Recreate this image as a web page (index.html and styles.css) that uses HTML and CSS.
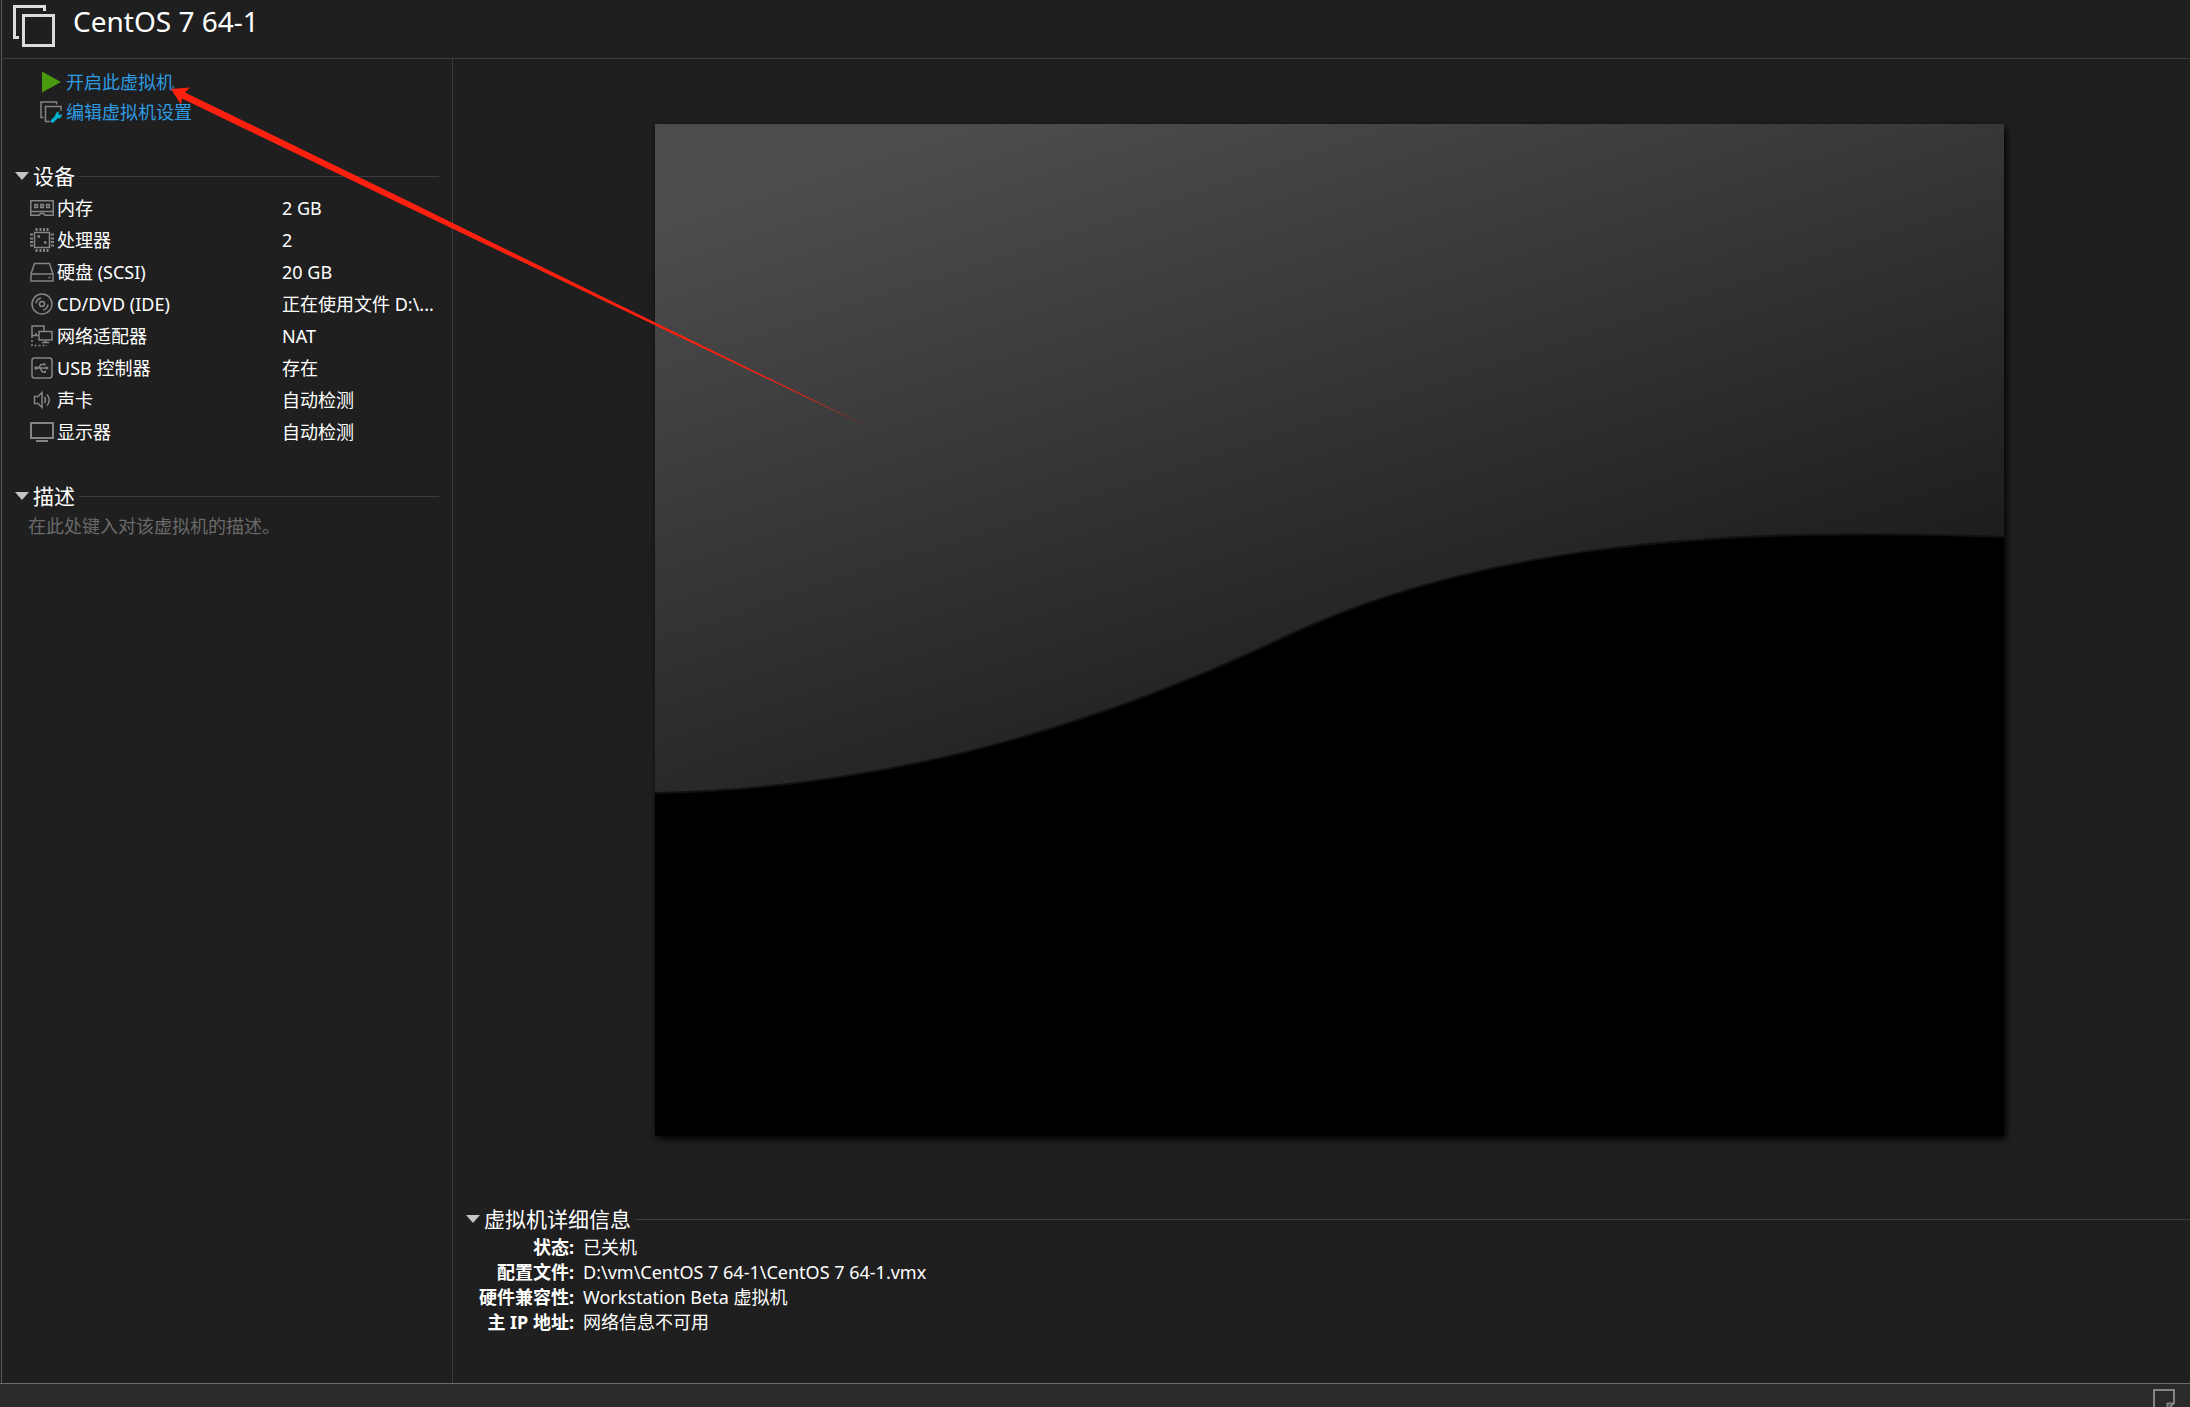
FILE: index.html
```html
<!DOCTYPE html>
<html lang="zh-CN">
<head>
<meta charset="utf-8">
<title>CentOS 7 64-1</title>
<link rel="stylesheet" href="styles.css">
</head>
<body>
<div class="app">
  <header class="title-bar">
    <svg class="title-icon" width="42" height="42" viewBox="0 0 42 42" fill="none" stroke="#dcdcdc" stroke-width="3" aria-hidden="true">
      <path d="M6 32.500H1.500V1.500H31.500V6"/><rect x="10.500" y="10.500" width="30" height="30"/>
    </svg>
    <h1 class="title">CentOS 7 64-1</h1>
  </header>

  <div class="workspace">
    <aside class="sidebar">
      <nav class="actions">
        <a class="action" href="#start">
          <svg width="22" height="22" viewBox="0 0 22 22" aria-hidden="true"><path d="M2 0.500L21 11L2 21.500Z" fill="#4a9a0f"/></svg>
          <span>开启此虚拟机</span>
        </a>
        <a class="action" href="#settings">
          <svg width="22" height="22" viewBox="0 0 22 22" fill="none" aria-hidden="true">
            <path d="M3.500 16.500H1V1H16.500V3.500M10 20.500H5.500V5.500H21V9.500" stroke="#858585" stroke-width="1.500"/>
            <path d="M12.500 20L18 14.500" stroke="#00b4d2" stroke-width="3.500" stroke-linecap="round"/>
            <path d="M20 10.500L17.500 13V15H19.500L21.800 12.700Q22.500 16.500 19.500 17.500Q15.500 17.500 15.200 14.500Q15.800 10.500 20 10.500Z" fill="#00b4d2"/>
          </svg>
          <span>编辑虚拟机设置</span>
        </a>
      </nav>

      <section class="section">
        <h2 class="section-title"><span class="caret"></span>设备</h2>
        <dl class="devices">
          <div class="device">
            <dt><svg class="icon" width="24" height="24" viewBox="0 0 24 24"><path d="M.8 4.800H23.200V19.200H15L13.500 17.500H10.500L9 19.200H.8ZM1 15.500H23"/><path d="M4.800 8.500H7.500V11.500H4.800ZM10.700 8.500H13.400V11.500H10.700ZM16.600 8.500H19.300V11.500H16.600Z"/></svg>内存</dt>
            <dd>2 GB</dd>
          </div>
          <div class="device">
            <dt><svg class="icon" width="24" height="24" viewBox="0 0 24 24"><rect x="4.500" y="4.500" width="15" height="15"/><path stroke-width="2" d="M6.500 0V3M10.500 0V3M14 0V3M17.500 0V3M6.500 21V24M10.500 21V24M14 21V24M17.500 21V24M0 6.500H3M0 10.500H3M0 14H3M0 17.500H3M21 6.500H24M21 10.500H24M21 14H24M21 17.500H24"/><path stroke-width="2.500" d="M7.500 8.500H10M14 14.500H16.500"/></svg>处理器</dt>
            <dd>2</dd>
          </div>
          <div class="device">
            <dt><svg class="icon" width="24" height="24" viewBox="0 0 24 24"><path d="M1 14L4.500 3.500H19.500L23 14V21H1ZM1 14H23M18.500 17.500H20.500"/></svg>硬盘 (SCSI)</dt>
            <dd>20 GB</dd>
          </div>
          <div class="device">
            <dt><svg class="icon" width="24" height="24" viewBox="0 0 24 24"><circle cx="12" cy="12" r="10"/><circle cx="12" cy="12" r="2.500"/><path d="M6 11.500Q6.500 7 11 6M18 12.500Q17.500 17 13 18"/></svg>CD/DVD (IDE)</dt>
            <dd>正在使用文件 D:\...</dd>
          </div>
          <div class="device">
            <dt><svg class="icon" width="24" height="24" viewBox="0 0 24 24"><path d="M8 11.500H2V2H14V7M9 7.500H22V16H9ZM15.500 16V18.500M12 18.500H19M6 9V11.500"/><path stroke-dasharray="2 2" d="M2 12V21.500H17"/></svg>网络适配器</dt>
            <dd>NAT</dd>
          </div>
          <div class="device">
            <dt><svg class="icon" width="24" height="24" viewBox="0 0 24 24"><rect x="2" y="2" width="20" height="20" rx="2.500"/><path d="M6 12H17M8.500 12L11 8.500H14M10 12L12.500 16H15"/><circle cx="6" cy="12" r="1" fill="#858585"/><path d="M16 10L19 12L16 14Z" fill="#858585" stroke="none"/><path d="M13.500 7.200H15.500V9.500H13.500ZM14 14.800H16V17H14Z" fill="#858585" stroke="none"/></svg>USB 控制器</dt>
            <dd>存在</dd>
          </div>
          <div class="device">
            <dt><svg class="icon" width="24" height="24" viewBox="0 0 24 24"><path d="M4.500 8.500H8L12 4.500V19.500L8 15.500H4.500ZM14.500 9Q16.500 12 14.500 15M17 6.500Q21.500 12 17 17.500"/></svg>声卡</dt>
            <dd>自动检测</dd>
          </div>
          <div class="device">
            <dt><svg class="icon" width="24" height="24" viewBox="0 0 24 24"><rect x="1" y="3" width="22" height="15" stroke-width="2"/><path stroke-width="2" d="M6 21H18"/></svg>显示器</dt>
            <dd>自动检测</dd>
          </div>
        </dl>
      </section>

      <section class="section">
        <h2 class="section-title"><span class="caret"></span>描述</h2>
        <p class="description">在此处键入对该虚拟机的描述。</p>
      </section>
    </aside>

    <main class="main">
      <div class="stage">
        <svg class="preview" viewBox="0 0 1349 1012" role="img" aria-label="虚拟机屏幕">
          <defs>
            <linearGradient id="sheen" gradientUnits="userSpaceOnUse" x1="33" y1="99" x2="255" y2="774">
              <stop offset="0" stop-color="#4c4c4c"/><stop offset="1" stop-color="#1d1d1d"/>
            </linearGradient>
          </defs>
          <rect width="1349" height="1012" fill="#000"/>
          <path d="M0 0H1349V413C1030 400 800 430 623 516C430 607 220 665 0 669Z" fill="url(#sheen)"/>
          <path d="M1349 413C1030 400 800 430 623 516C430 607 220 665 0 669" fill="none" stroke="#111" stroke-width="2"/>
        </svg>
      </div>

      <section class="details">
        <h2 class="section-title"><span class="caret"></span>虚拟机详细信息</h2>
        <dl class="facts">
          <dt>状态:</dt><dd>已关机</dd>
          <dt>配置文件:</dt><dd>D:\vm\CentOS 7 64-1\CentOS 7 64-1.vmx</dd>
          <dt>硬件兼容性:</dt><dd>Workstation Beta 虚拟机</dd>
          <dt>主 IP 地址:</dt><dd>网络信息不可用</dd>
        </dl>
      </section>
    </main>
  </div>

  <footer class="status-bar">
    <svg width="22" height="22" viewBox="0 0 22 22" fill="none" stroke="#858585" stroke-width="2" aria-hidden="true"><path d="M1 1H21V14L14 21H1ZM14.500 21V14.500H21"/></svg>
  </footer>

  <svg class="pointer" width="710" height="350" viewBox="0 0 710 350" aria-hidden="true">
    <defs>
      <linearGradient id="fade" gradientUnits="userSpaceOnUse" x1="640" y1="0" x2="708" y2="0">
        <stop offset="0" stop-color="#ff2010"/><stop offset="1" stop-color="#ff2010" stop-opacity="0.500"/>
      </linearGradient>
    </defs>
    <path d="M1 4L20 2.500L15 7.500L234 114L430 210.500L708 346.500L430 214L232 119.500L12 13.500L11 19.500Z" fill="url(#fade)"/>
  </svg>
</div>
</body>
</html>
```

FILE: styles.css
```css
* {
  box-sizing: border-box;
}

body {
  margin: 0;
  background: #1f1f1f;
  color: #fff;
  font-family: "Noto Sans", "Noto Sans CJK SC", sans-serif;
  font-size: 18px;
  line-height: 32px;
}

h1, h2, p, dl, dd {
  margin: 0;
  font-weight: 400;
}

.app {
  position: relative;
  display: flex;
  flex-direction: column;
  min-height: 100vh;
  overflow: hidden;
}

.title-bar {
  display: flex;
  gap: 18px;
  height: 59px;
  margin-left: 1px;
  padding: 5px 11px 0;
  border-left: 1px solid #5c5c5c;
  border-bottom: 1px solid #3c3c3c;
}

.title {
  font-size: 28px;
  line-height: 32px;
}

.workspace {
  display: flex;
  flex: 1;
  margin-left: 1px;
  border-left: 1px solid #5c5c5c;
}

.sidebar {
  flex: none;
  width: 451px;
  padding: 8px 13px;
  border-right: 1px solid #3c3c3c;
}

.actions {
  display: flex;
  flex-direction: column;
  padding: 0 0 1px 25px;
  line-height: 30px;
}

.action {
  display: flex;
  align-items: center;
  align-self: flex-start;
  gap: 4px;
  color: #2f9be0;
  text-decoration: none;
}

.section {
  padding-top: 32px;
}

.section-title {
  display: flex;
  align-items: center;
  gap: 4px;
  font-size: 21px;
  line-height: 32px;
}

.section-title::after {
  content: "";
  flex: 1;
  height: 1px;
  background: #3c3c3c;
}

.caret {
  border: 7px solid transparent;
  border-top: 8px solid #c4c4c4;
  border-bottom: 0;
}

.device {
  display: flex;
}

.device dt {
  display: flex;
  flex: none;
  align-items: center;
  gap: 3px;
  width: 252px;
}

.device dd {
  flex: 1;
  white-space: nowrap;
}

.devices {
  padding-left: 15px;
}

.icon {
  fill: none;
  stroke: #858585;
  stroke-width: 1.5;
}

.description {
  padding-left: 13px;
  line-height: 28px;
  color: #6a6a6a;
}

.main {
  display: flex;
  flex: 1;
  flex-direction: column;
}

.stage {
  flex: 1;
  padding: 65px 186px;
  padding-left: 202px;
}

.preview {
  display: block;
  width: 100%;
  box-shadow: 2px 3px 7px #000;
}

.details {
  padding: 0 0 48px 13px;
}

.facts {
  display: grid;
  grid-template-columns: 108px 1fr;
  column-gap: 9px;
  line-height: 25px;
}

.facts dt {
  font-weight: 700;
  text-align: right;
  white-space: nowrap;
}

.status-bar {
  display: flex;
  justify-content: flex-end;
  height: 24px;
  padding: 5px 15px;
  border-top: 1px solid #6a6a6a;
  background: #2a2a2a;
}

.status-bar svg {
  flex: none;
}

.pointer {
  position: absolute;
  top: 85px;
  left: 170px;
  pointer-events: none;
}
```
